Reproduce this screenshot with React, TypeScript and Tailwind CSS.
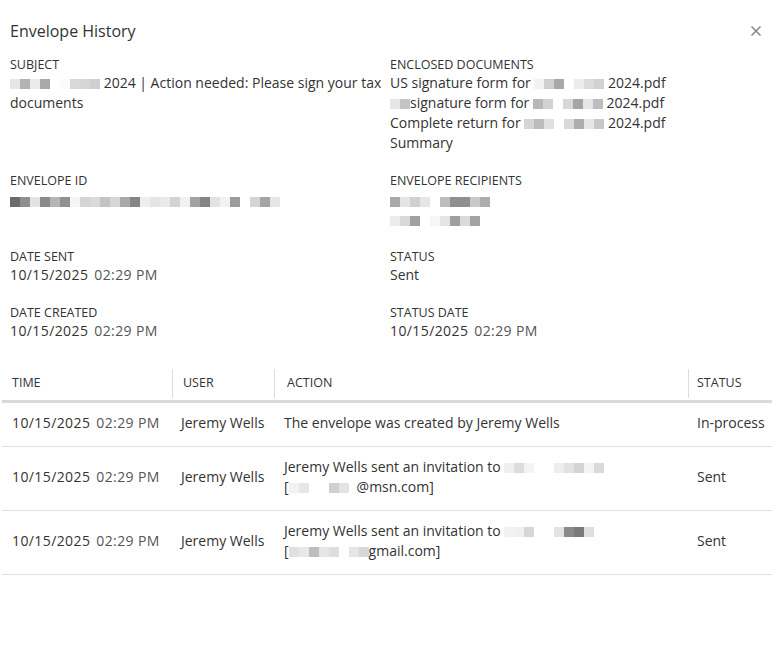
import { X } from "lucide-react";

type Shade = string;

function Pixels({ shades, className = "" }: { shades: Shade[]; className?: string }) {
  return (
    <span className={`inline-flex align-middle h-[10px] ${className}`}>
      {shades.map((c, i) => (
        <span key={i} className="w-[10px] h-[10px]" style={{ backgroundColor: c }} />
      ))}
    </span>
  );
}

function Field({ label, children }: { label: string; children: React.ReactNode }) {
  return (
    <div className="flex flex-col">
      <span className="text-[12.5px] leading-[16px] uppercase text-[#333]">{label}</span>
      <div className="text-[14px] leading-[20px] text-[#333]">{children}</div>
    </div>
  );
}

function DateTime() {
  return (
    <span className="tracking-[0.4px]">
      10/15/2025<span className="ml-[6px] text-[#555]">02:29 PM</span>
    </span>
  );
}

const rows = [
  {
    action: <>The envelope was created by Jeremy Wells</>,
    status: "In-process",
    tall: false,
  },
  {
    action: (
      <>
        Jeremy Wells sent an invitation to{" "}
        <Pixels shades={["#efefef", "#dcdcdc", "#f3f3f3", "#fff", "#fff", "#eee", "#e2e2e2", "#d4d4d4", "#f3f3f3", "#dadada"]} />
        <br />[<Pixels shades={["#f2f2f2", "#e6e6e6", "#fff", "#fff", "#cfcfcf", "#e3e3e3"]} />
        <span className="inline-block w-[8px]" />
        @msn.com]
      </>
    ),
    status: "Sent",
    tall: true,
  },
  {
    action: (
      <>
        Jeremy Wells sent an invitation to{" "}
        <Pixels shades={["#f2f2f2", "#f0f0f0", "#d7d7d7", "#fff", "#fff", "#e3e3e3", "#8a8a8a", "#7a7a7a", "#dedede"]} />
        <br />[<Pixels shades={["#e0e0e0", "#e8e8e8", "#bdbdbd", "#e6e6e6", "#dedede", "#fff", "#e6e6e6", "#d8d8d8"]} />
        gmail.com]
      </>
    ),
    status: "Sent",
    tall: true,
  },
];

export default function App() {
  return (
    <div className="w-[780px] h-[655px] bg-white font-['Open_Sans','Lato',sans-serif] text-[#333] overflow-hidden">
      <div className="flex items-center justify-between pl-[10px] pr-[16px] pt-[19px] h-[43px]">
        <h1 className="text-[16px] leading-[22px] text-[#333]">Envelope History</h1>
        <X size={16} strokeWidth={2.5} color="#8a8a8a" />
      </div>

      <div className="grid grid-cols-[380px_1fr] pl-[10px] pt-[14px] gap-y-[20px]">
        <Field label="Subject">
          <Pixels shades={["#e6e6e6", "#b3b3b3", "#eaeaea", "#a8a8a8", "#fff", "#fafafa", "#d8d8d8", "#d5d5d5", "#cfcfcf"]} />{" "}
          2024 | Action needed: Please sign your tax
          <br />
          documents
        </Field>
        <Field label="Enclosed Documents">
          US signature form for{" "}
          <Pixels shades={["#f2f2f2", "#cfcfcf", "#a8a8a8", "#fff", "#ececec", "#dcdcdc", "#d2d2d2"]} /> 2024.pdf
          <br />
          <Pixels shades={["#e6e6e6", "#c5c5c5"]} />
          signature form for{" "}
          <Pixels shades={["#b8b8b8", "#d2d2d2", "#fff", "#d8d8d8", "#a5a5a5", "#e6e6e6", "#bdbdbd"]} /> 2024.pdf
          <br />
          Complete return for{" "}
          <Pixels shades={["#d5d5d5", "#bcbcbc", "#e0e0e0", "#fff", "#dadada", "#adadad", "#e6e6e6", "#c8c8c8"]} /> 2024.pdf
          <br />
          Summary
        </Field>

        <Field label="Envelope ID">
          <Pixels
            className="mt-[3px]"
            shades={[
              "#6b6b6b", "#8f8f8f", "#e3e3e3", "#8a8a8a", "#b5b5b5", "#909090", "#f5f5f5",
              "#d4d4d4", "#dadada", "#c3c3c3", "#d6d6d6", "#a9a9a9", "#858585", "#eeeeee",
              "#e5e5e5", "#eaeaea", "#d3d3d3", "#f1f1f1", "#a2a2a2", "#848484", "#e3e3e3",
              "#f2f2f2", "#9c9c9c", "#fff", "#d4d4d4", "#a4a4a4", "#e6e6e6",
            ]}
          />
        </Field>
        <Field label="Envelope Recipients">
          <Pixels className="mt-[3px]" shades={["#a9a9a9", "#e5e5e5", "#d0d0d0", "#e6e6e6", "#fff", "#bdbdbd", "#8f8f8f", "#8f8f8f", "#c8c8c8", "#adadad"]} />
          <br />
          <Pixels className="mt-[2px]" shades={["#ececec", "#d8d8d8", "#a0a0a0", "#fff", "#f6f6f6", "#e4e4e4", "#9f9f9f", "#dadada", "#a3a3a3"]} />
        </Field>

        <Field label="Date Sent">
          <DateTime />
        </Field>
        <Field label="Status">Sent</Field>

        <Field label="Date Created">
          <DateTime />
        </Field>
        <Field label="Status Date">
          <DateTime />
        </Field>
      </div>

      <div className="mx-[2px] mt-[26px] w-[770px]">
        <div className="grid grid-cols-[170px_102px_414px_84px] h-[36px] border-b-[3px] border-[#d6d9dd] text-[12.5px] text-[#333] uppercase">
          <div className="flex items-center pl-[10px]">Time</div>
          <div className="flex items-center pl-[10px] my-[2px] border-l border-[#dcdcdc]">User</div>
          <div className="flex items-center pl-[12px] my-[2px] border-l border-[#dcdcdc]">Action</div>
          <div className="flex items-center pl-[8px] my-[2px] border-l border-[#dcdcdc]">Status</div>
        </div>
        {rows.map((r, i) => (
          <div
            key={i}
            className={`grid grid-cols-[170px_102px_414px_84px] items-center pb-[3px] border-b border-[#dddfe2] text-[14px] leading-[20px] text-[#333] ${r.tall ? "h-[64px]" : "h-[44px]"}`}
          >
            <div className="pl-[10px] whitespace-nowrap">
              <DateTime />
            </div>
            <div className="pl-[9px] whitespace-nowrap">Jeremy Wells</div>
            <div className="pl-[10px]">{r.action}</div>
            <div className="pl-[9px] whitespace-nowrap">{r.status}</div>
          </div>
        ))}
      </div>
    </div>
  );
}
